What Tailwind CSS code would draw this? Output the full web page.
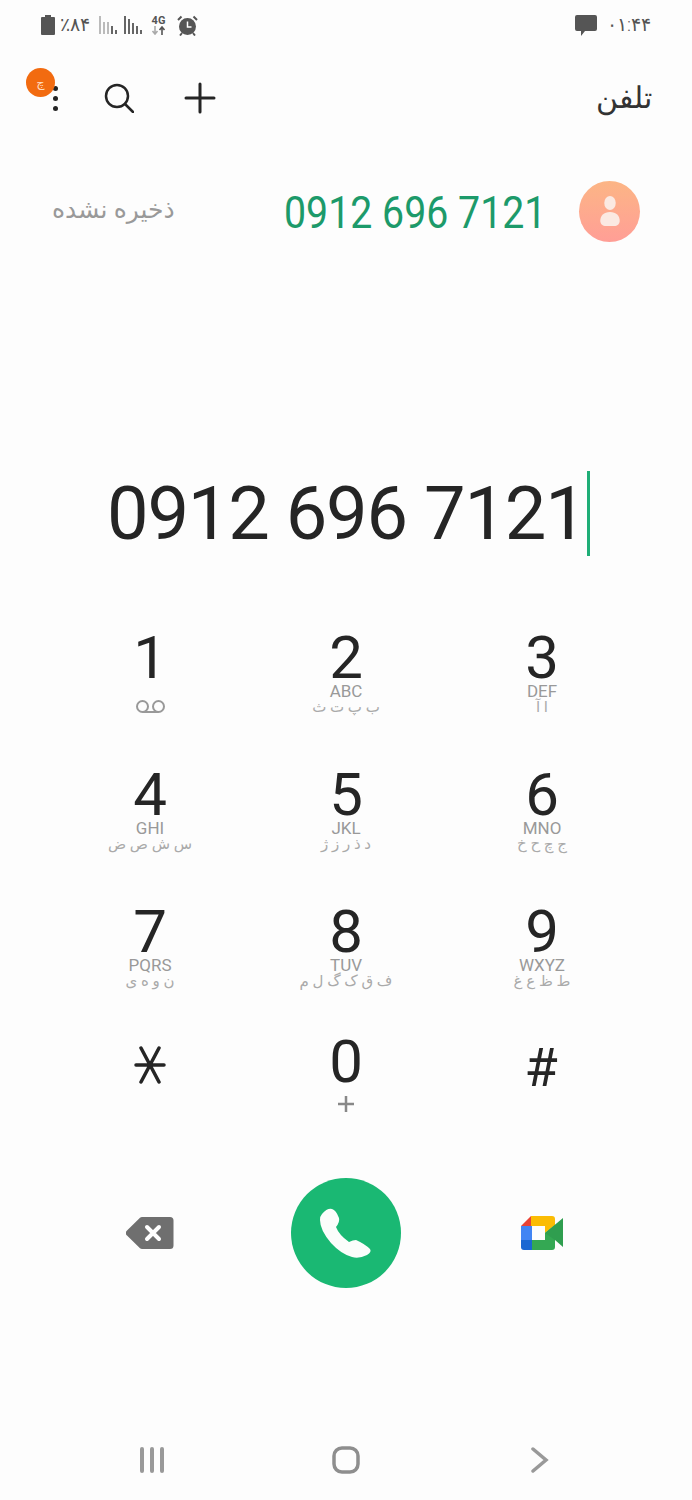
<!DOCTYPE html>
<html lang="fa">
<head>
  <meta charset="UTF-8">
  <title>Phone</title>
  <script src="https://cdn.jsdelivr.net/npm/@tailwindcss/browser@4"></script>
</head>
<body class="bg-[#fdfdfd]">
<div class="w-[692px] h-[1500px] overflow-hidden flex flex-col font-['Roboto','DejaVu_Sans',sans-serif] text-[#252525]">

  <!-- Status bar -->
  <div class="h-[50px] pl-[41px] pr-[41px] flex items-start justify-between text-[#555]">
    <div class="flex items-center h-[20px] mt-[15px]">
      <svg class="w-[14px] h-[20px]" viewBox="0 0 14 20"><path fill="#555" d="M4 0h6v2h3a1 1 0 0 1 1 1v16a1 1 0 0 1-1 1H1a1 1 0 0 1-1-1V3a1 1 0 0 1 1-1h3z"/></svg>
      <span class="ml-[5px] w-[31px] text-[19px] leading-[20px] font-light whitespace-nowrap">٪۸۴</span>
      <svg class="ml-[8px] w-[19px] h-[20px]" viewBox="0 0 19 20" fill="none" stroke-width="2"><path stroke="#bbb" d="M1 1v18M5 7v12M9 7v12"/><path stroke="#666" d="M13 11v8M17 15v4"/></svg>
      <svg class="ml-[6px] w-[19px] h-[20px]" viewBox="0 0 19 20" fill="none" stroke="#666" stroke-width="2"><path d="M1 1v18M5 4v15M9 8v11M13 11v8M17 15v4"/></svg>
      <div class="ml-[7px] w-[17px] flex flex-col items-center">
        <span class="text-[11px] leading-[11px] font-bold">4G</span>
        <svg class="w-[15px] h-[9px]" viewBox="0 0 15 9" fill="none" stroke-width="1.6"><path stroke="#aaa" d="M4 0v7M1.5 5 4 8l2.500-3"/><path stroke="#555" d="M11 9V2M8.500 4 11 1l2.500 3"/></svg>
      </div>
      <svg class="ml-[10px] w-[21px] h-[21px]" viewBox="0 0 21 21"><circle cx="10.500" cy="11.500" r="8.500" fill="#555"/><path fill="none" stroke="#fff" stroke-width="1.500" d="M10.500 6.500v5.500h4"/><path fill="none" stroke="#555" stroke-width="2" d="M1 5 4.500 1.500M20 5 16.500 1.500M5 18l-2 2.500M16 18l2 2.500"/></svg>
    </div>
    <div class="flex items-center h-[20px] mt-[15px]">
      <svg class="w-[22px] h-[21px]" viewBox="0 0 22 21"><path fill="#555" d="M2 0h18a2 2 0 0 1 2 2v12a2 2 0 0 1-2 2H10l-4 5v-5H2a2 2 0 0 1-2-2V2a2 2 0 0 1 2-2z"/></svg>
      <span class="ml-[10px] text-[19px] leading-[20px] font-light whitespace-nowrap">۰۱:۴۴</span>
    </div>
  </div>

  <!-- Header -->
  <div class="relative h-[96px] pl-[52px] pr-[40px] flex items-center justify-between">
    <div class="flex items-center">
      <div class="w-[6px] flex flex-col gap-[5px] items-center">
        <span class="w-[5px] h-[5px] rounded-full bg-[#252525]"></span>
        <span class="w-[5px] h-[5px] rounded-full bg-[#252525]"></span>
        <span class="w-[5px] h-[5px] rounded-full bg-[#252525]"></span>
      </div>
      <svg class="ml-[46px] w-[30px] h-[30px]" viewBox="0 0 30 30" fill="none" stroke="#252525" stroke-width="2.500"><circle cx="13" cy="13" r="11"/><path stroke-linecap="round" d="M21 21l8 8"/></svg>
      <svg class="ml-[50px] w-[32px] h-[32px]" viewBox="0 0 32 32" fill="none" stroke="#252525" stroke-width="3" stroke-linecap="round"><path d="M16 2v28M2 16h28"/></svg>
    </div>
    <span class="text-[30px] leading-[40px] font-light text-[#333]">تلفن</span>
    <span class="absolute left-[26px] top-[18px] w-[29px] h-[29px] rounded-full bg-[#f26b10] text-[#ffd9bd] text-[13px] leading-[29px] text-center">چ</span>
  </div>

  <!-- Matched contact -->
  <div class="mt-[30px] h-[70px] pl-[52px] pr-[52px] flex items-center">
    <span class="w-[122px] text-[25px] leading-[30px] text-[#999] whitespace-nowrap mb-[2px]">ذخیره نشده</span>
    <span class="ml-[110px] mt-[3px] text-[44px] leading-[50px] text-[#1c9a6a] whitespace-nowrap origin-left scale-x-[.893]">0912 696 7121</span>
    <div class="ml-auto w-[61px] h-[61px] rounded-full bg-gradient-to-b from-[#fcb585] to-[#ff9e96] flex items-center justify-center">
      <svg class="w-[22px] h-[30px]" viewBox="0 0 24 34" fill="#fbe9e2"><ellipse cx="12" cy="8" rx="6.500" ry="8"/><path d="M12 18c7 0 11 4 11 10 0 4-3 6-6 6H7c-3 0-6-2-6-6 0-6 4-10 11-10z"/></svg>
    </div>
  </div>

  <!-- Dialed number -->
  <div class="mt-[225px] h-[85px] pl-[107px] flex items-center">
    <span class="text-[74px] leading-[85px] tracking-[-1.2px] whitespace-nowrap font-normal">0912 696 7121</span>
    <span class="ml-[1px] w-[3px] h-[85px] bg-[#1fae77]"></span>
  </div>

  <!-- Keypad -->
  <div class="mt-[72px] pl-[52px] pr-[52px] grid grid-cols-3 grid-rows-[137px_137px_130px_130px] text-center">
    <div>
      <div class="pt-[5px] text-[60px] leading-[50px]">1</div>
      <svg class="mx-auto mt-[17px] w-[31px] h-[14px]" viewBox="0 0 31 14" fill="none" stroke="#999" stroke-width="2"><circle cx="7.500" cy="6.500" r="5.500"/><circle cx="23.500" cy="6.500" r="5.500"/><path d="M7.500 12h16"/></svg>
    </div>
    <div>
      <div class="pt-[5px] text-[60px] leading-[50px]">2</div>
      <div class="text-[17px] leading-[16px] text-[#999]">ABC</div>
      <div class="text-[15px] leading-[17px] text-[#aaa] whitespace-nowrap">ب پ ت ث</div>
    </div>
    <div>
      <div class="pt-[5px] text-[60px] leading-[50px]">3</div>
      <div class="text-[17px] leading-[16px] text-[#999]">DEF</div>
      <div class="text-[15px] leading-[17px] text-[#aaa] whitespace-nowrap">ا آ</div>
    </div>
    <div>
      <div class="pt-[5px] text-[60px] leading-[50px]">4</div>
      <div class="text-[17px] leading-[16px] text-[#999]">GHI</div>
      <div class="text-[15px] leading-[17px] text-[#aaa] whitespace-nowrap">س ش ص ض</div>
    </div>
    <div>
      <div class="pt-[5px] text-[60px] leading-[50px]">5</div>
      <div class="text-[17px] leading-[16px] text-[#999]">JKL</div>
      <div class="text-[15px] leading-[17px] text-[#aaa] whitespace-nowrap">د ذ ر ز ژ</div>
    </div>
    <div>
      <div class="pt-[5px] text-[60px] leading-[50px]">6</div>
      <div class="text-[17px] leading-[16px] text-[#999]">MNO</div>
      <div class="text-[15px] leading-[17px] text-[#aaa] whitespace-nowrap">ج چ ح خ</div>
    </div>
    <div>
      <div class="pt-[5px] text-[60px] leading-[50px]">7</div>
      <div class="text-[17px] leading-[16px] text-[#999]">PQRS</div>
      <div class="text-[15px] leading-[17px] text-[#aaa] whitespace-nowrap">ن و ه ی</div>
    </div>
    <div>
      <div class="pt-[5px] text-[60px] leading-[50px]">8</div>
      <div class="text-[17px] leading-[16px] text-[#999]">TUV</div>
      <div class="text-[15px] leading-[17px] text-[#aaa] whitespace-nowrap">ف ق ک گ ل م</div>
    </div>
    <div>
      <div class="pt-[5px] text-[60px] leading-[50px]">9</div>
      <div class="text-[17px] leading-[16px] text-[#999]">WXYZ</div>
      <div class="text-[15px] leading-[17px] text-[#aaa] whitespace-nowrap">ط ظ ع غ</div>
    </div>
    <div>
      <svg class="mx-auto mt-[14px] w-[32px] h-[38px]" viewBox="0 0 32 38" fill="none" stroke="#252525" stroke-width="3.500" stroke-linecap="round"><path d="M2 19h28M7 2l18 34M25 2 7 36"/></svg>
    </div>
    <div>
      <div class="text-[60px] leading-[60px]">0</div>
      <svg class="mx-auto mt-[4px] w-[16px] h-[16px]" viewBox="0 0 16 16" fill="none" stroke="#888" stroke-width="2.500"><path d="M8 0v16M0 8h16"/></svg>
    </div>
    <div>
      <div class="pt-[3px] -ml-[2px] text-[54px] leading-[66px]">#</div>
    </div>
  </div>

  <!-- Call actions -->
  <div class="mt-[16px] h-[110px] pl-[52px] pr-[52px] grid grid-cols-3 items-center justify-items-center">
    <svg class="w-[48px] h-[32px]" viewBox="0 0 48 32"><path fill="#6f6f6f" d="M16 0h28a3.500 3.500 0 0 1 3.500 3.500v25A3.500 3.500 0 0 1 44 32H16a3 3 0 0 1-2-.8L1 18.500a3.500 3.500 0 0 1 0-5L14 .8A3 3 0 0 1 16 0z"/><path stroke="#fff" stroke-width="4" stroke-linecap="round" d="M21 10l12 12M33 10 21 22"/></svg>
    <div class="w-[110px] h-[110px] rounded-full bg-[#1ab873] flex items-center justify-center">
      <svg class="w-[54px] h-[54px]" viewBox="0 0 54 54"><path fill="#fbfdfb" d="M3 8Q8 2 13 3Q17 4 20 12Q21 16 17 21Q20 29 30 36Q34 34 37 34Q46 38 51 43Q53 46 48 49Q40 53 33 51Q22 48 12 37Q1 24 1 14Q1 10 3 8Z"/></svg>
    </div>
    <svg class="w-[44px] h-[34px]" viewBox="0 0 44 34">
      <path fill="#ea4335" d="M11 0 1 10h10z"/>
      <path fill="#fbbc04" d="M11 0h21a3 3 0 0 1 3 3v6l-10 8V10H11z"/>
      <rect fill="#4285f4" x="1" y="10" width="11" height="14"/>
      <path fill="#1967d2" d="M1 24h11v10H4a3 3 0 0 1-3-3z"/>
      <path fill="#34a853" d="M12 24h13v-7l10-8v22a3 3 0 0 1-3 3H12z"/>
      <path fill="#2f9e4f" d="M25 17 43 2v29L35 24z"/>
    </svg>
  </div>

  <!-- Navigation bar -->
  <div class="mt-[158px] pl-[55px] pr-[55px] grid grid-cols-3 items-center justify-items-center">
    <svg class="w-[26px] h-[26px]" viewBox="0 0 26 26" fill="none" stroke="#999" stroke-width="4" stroke-linecap="round"><path d="M3 2v22M13 2v22M23 2v22"/></svg>
    <svg class="w-[28px] h-[28px]" viewBox="0 0 28 28" fill="none" stroke="#8e8e8e" stroke-width="3.500"><rect x="2" y="2" width="24" height="24" rx="8"/></svg>
    <svg class="w-[18px] h-[26px]" viewBox="0 0 18 26" fill="none" stroke="#999" stroke-width="3.500" stroke-linecap="round"><path d="M2 2l13 11L2 24"/></svg>
  </div>
</div>
</body>
</html>
